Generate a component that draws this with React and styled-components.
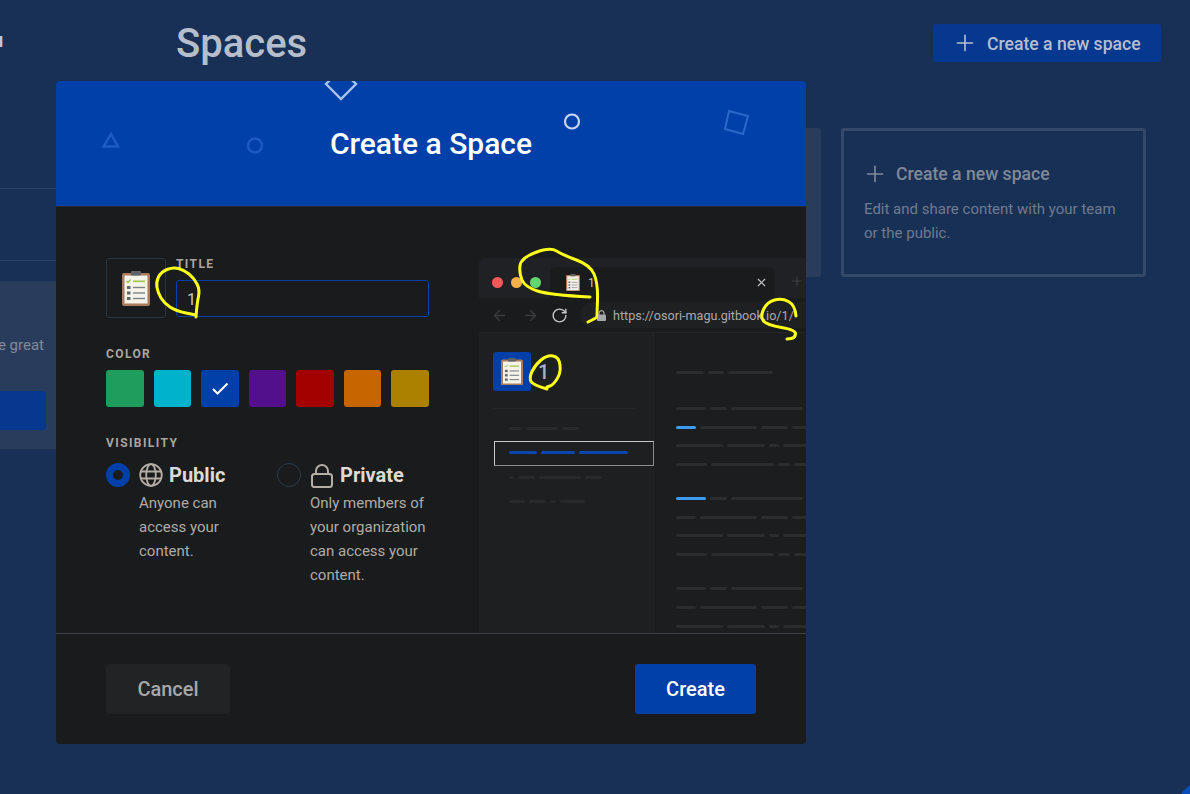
import React from "react";
import styled, { createGlobalStyle } from "styled-components";
import { ArrowLeft, ArrowRight, Plus, RotateCw, X } from "lucide-react";

const Global = createGlobalStyle`
  html, body { margin: 0; padding: 0; background: #193056; }
  body { font-family: Roboto, "Liberation Sans", sans-serif; }
  * { box-sizing: border-box; }
`;

const Page = styled.div`
  position: relative; display: flex; width: 1190px; height: 794px;
  overflow: hidden; background: #193056;
`;
const SideRail = styled.aside`
  width: 60px; flex: none; overflow: hidden; padding-top: 28px;
  display: flex; flex-direction: column;
`;
const Brand = styled.div`
  display: flex; justify-content: flex-end; height: 24px; padding-right: 56.5px;
  font-size: 21px; font-weight: 500; line-height: 24px; color: #c2c7d0; white-space: nowrap;
`;
const RailRule = styled.div`
  height: 1px; background: #2e4263; margin-top: ${p => p.$top}px; flex: none;
`;
const Promo = styled.div`
  margin-top: 20px; height: 168px; background: #2a3c5c; padding-top: 55px;
  display: flex; flex-direction: column; align-items: flex-end; flex: none;
`;
const PromoText = styled.div`
  font-size: 15px; line-height: 18px; color: #7f8a9b; white-space: nowrap; padding-right: 16px;
`;
const PromoButton = styled.div`
  margin-top: 37px; margin-right: 14px; width: 46px; height: 39px;
  background: #07388f; border-radius: 0 3px 3px 0;
`;
const Main = styled.main`
  flex: 1; min-width: 0; padding: 24px 29px 0 116px; display: flex; flex-direction: column;
`;
const TopBar = styled.header`
  display: flex; justify-content: space-between; align-items: center; height: 38px;
`;
const PageTitle = styled.h1`
  margin: 2px 0 0; font-size: 40px; font-weight: 500; line-height: 38px; color: #b6becb;
`;
const NewButton = styled.div`
  width: 228px; height: 38px; border-radius: 3px; background: #07388f; color: #b5bed0;
  display: flex; align-items: center; gap: 9px; padding-left: 19px;
  font-size: 17.6px; font-weight: 500;
`;
const ButtonLabel = styled.span`
  margin-top: 2px;
`;
const Cards = styled.div`
  display: grid; grid-template-columns: 645px 305px; gap: 20px; margin-top: 66px;
`;
const FilledCard = styled.div`
  height: 149px; background: #2a3c5c; border-radius: 3px;
`;
const OutlineCard = styled.div`
  height: 149px; border: 3px solid #34486a; border-radius: 3px; padding: 29px 20px;
`;
const CardTitle = styled.div`
  display: flex; align-items: center; gap: 8px; height: 28px; margin-left: -2px;
  font-size: 17.6px; font-weight: 500; color: #7f8998;
`;
const CardText = styled.p`
  margin: 9px 0 0; font-size: 15px; line-height: 24px; color: #6e7b90;
`;

const Modal = styled.section`
  position: absolute; left: 56px; top: 81px; width: 750px; height: 663px;
  border-radius: 4px; overflow: hidden; background: #1a1b1d;
  display: flex; flex-direction: column;
`;
const ModalHead = styled.header`
  position: relative; height: 126px; flex: none; background: #0040a8; overflow: hidden;
  display: flex; align-items: center; justify-content: center; padding-top: 1px;
  border-bottom: 1px solid #232a36;
`;
const Decor = styled.svg`
  position: absolute; left: 0; top: 0;
`;
const ModalTitle = styled.h2`
  position: relative; margin: 0; font-size: 30px; font-weight: 500; color: #fff; line-height: 36px;
`;
const ModalBody = styled.div`
  flex: 1; min-height: 0; display: flex; gap: 50px; padding: 51px 0 0 50px;
`;
const FormColumn = styled.div`
  width: 323px; flex: none; display: flex; flex-direction: column;
`;
const TitleRow = styled.div`
  display: flex; gap: 10px;
`;
const IconBox = styled.div`
  width: 60px; height: 60px; flex: none; border: 1px solid #2a3640; border-radius: 3px;
  display: flex; align-items: center; justify-content: center;
`;
const TitleField = styled.div`
  flex: 1; display: flex; flex-direction: column;
`;
const Label = styled.div`
  font-size: 12px; font-weight: 700; letter-spacing: 1.4px; line-height: 12px; color: #aaa69f;
  margin-top: ${p => p.$top || 0}px;
`;
const TitleInput = styled.div`
  height: 37px; margin-top: 10px; border: 1px solid #0040a8; border-radius: 3px;
  padding: 0 10px; line-height: 37px; font-size: 16px; color: #c6c6c6;
`;
const Swatches = styled.div`
  display: flex; gap: 10px; margin-top: 10px;
`;
const Swatch = styled.div`
  flex: 1; height: 37px; border-radius: 3px; background: ${p => p.$c};
  display: flex; align-items: center; justify-content: center;
`;
const Options = styled.div`
  display: flex; margin-top: 14px;
`;
const Option = styled.div`
  display: flex; gap: 9px; width: ${p => p.$w}px; flex: none;
`;
const Radio = styled.div`
  width: 24px; height: 24px; flex: none; border-radius: 50%;
  border: ${p => (p.$on ? "7px solid #0040a8" : "1px solid #2a3a4a")};
`;
const OptionBody = styled.div`
  display: flex; flex-direction: column;
`;
const OptionHead = styled.div`
  display: flex; align-items: center; gap: 6px; height: 24px;
  font-size: 20px; font-weight: 700; color: #dedad3;
`;
const OptionText = styled.p`
  margin: 4px 0 0; font-size: 15px; line-height: 24px; color: #b0aca5;
`;

const Preview = styled.div`
  flex: 1; min-width: 0; overflow: hidden; background: #1c1d1f; border-radius: 5px 0 0 0;
  display: flex; flex-direction: column;
`;
const TabStrip = styled.div`
  position: relative; height: 40px; flex: none; background: #202124; display: flex; align-items: flex-end;
  padding-left: 13px;
`;
const Lights = styled.div`
  display: flex; gap: 8px; width: 58px; flex: none; align-self: flex-start; margin-top: 18.5px;
`;
const Light = styled.span`
  width: 11px; height: 11px; border-radius: 50%; background: ${p => p.$c};
`;
const Tab = styled.div`
  width: 225px; height: 31px; flex: none; background: #1a1b1d; border-radius: 6px 6px 0 0;
  display: flex; align-items: center; padding: 0 7px 0 16px; gap: 8px;
  font-size: 12px; color: #c4c6c9;
`;
const TabName = styled.span`
  flex: 1;
`;
const NewTab = styled.div`
  margin-left: 15px; align-self: flex-start; margin-top: 16px; color: #3d3f43; display: flex;
`;
const Toolbar = styled.div`
  height: 35px; flex: none; background: #1a1b1d; border-bottom: 1px solid #232527;
  display: flex; align-items: center; padding-left: 12px;
`;
const NavIcon = styled.div`
  width: ${p => p.$w}px; flex: none; display: flex; color: ${p => p.$c};
`;
const AddressPill = styled.div`
  flex: 1; height: 26px; border-radius: 13px 0 0 13px; background: #1f2022;
  display: flex; align-items: center; padding-left: 17px; gap: 7px;
  font-size: 12.6px; color: #a9abae; white-space: nowrap;
`;
const PreviewBody = styled.div`
  flex: 1; min-height: 0; display: flex;
`;
const PreviewSide = styled.div`
  width: 175px; flex: none; background: #1e1f21; border-right: 1px solid #212325;
  padding-top: 19px; display: flex; flex-direction: column;
`;
const SideBrand = styled.div`
  display: flex; align-items: center; gap: 7px; padding-left: 14px; height: 39px;
  font-size: 20px; font-weight: 500; color: #a9b3c0;
`;
const BrandTile = styled.div`
  width: 38px; height: 39px; border-radius: 3px; background: #0040a8;
  display: flex; align-items: center; justify-content: center;
`;
const SideRule = styled.div`
  height: 1px; margin: 17px 16px 0 14px; background: #232527;
`;
const SideRow = styled.div`
  display: flex; gap: 4px; padding-left: 30px; margin-top: ${p => p.$top}px;
`;
const SelectedNav = styled.div`
  flex: none; height: 25px; margin: 11px 0 0 15px; width: 160px; border: 1.5px solid #c8c8c8;
  border-bottom-color: #8c8c8c; border-right-color: #8c8c8c;
  padding: 9px 0 0 13.5px; display: flex; gap: 4px;
`;
const Bar = styled.span`
  display: block; height: 3px; flex: none; border-radius: 2px;
  width: ${p => p.$w}px; background: ${p => p.$c || "#27292c"};
`;
const PreviewMain = styled.div`
  flex: 1; min-width: 0; overflow: hidden; padding: 38px 0 0 22px;
  display: flex; flex-direction: column;
`;
const LineGroup = styled.div`
  display: flex; flex-direction: column; gap: 15.7px; margin-bottom: ${p => p.$gap}px;
`;
const Line = styled.div`
  display: flex; gap: 4px;
`;

const Footer = styled.footer`
  height: 111px; flex: none; border-top: 1px solid #3a4046; padding: 30px 50px;
  display: flex; justify-content: space-between; align-items: flex-start;
`;
const CancelButton = styled.div`
  width: 124px; height: 50px; border-radius: 3px; background: #222325; color: #a8a8a8;
  display: flex; align-items: center; justify-content: center; font-size: 20px; font-weight: 500;
`;
const CreateButton = styled.div`
  width: 121px; height: 50px; border-radius: 3px; background: #0040a8; color: #fff;
  display: flex; align-items: center; justify-content: center; font-size: 20px; font-weight: 500;
`;
const Scribbles = styled.svg`
  position: absolute; left: 0; top: 0; pointer-events: none;
`;
const ChatBubble = styled.div`
  position: absolute; left: 1177px; top: 781px; width: 56px; height: 56px;
  border-radius: 50%; background: #0a4dbb;
`;

const Clipboard = ({ w }) => (
  <svg width={w} height={w * 1.25} viewBox="0 0 28 35">
    <rect x="0" y="2" width="28" height="33" rx="2" fill="#a97a5c" />
    <rect x="2.5" y="4.5" width="23" height="28" fill="#f6f3ea" />
    <rect x="9" y="0" width="10" height="4.5" rx="1" fill="#5d6369" />
    <path d="M4.5 10l1.5 1.5 2.5-3" stroke="#8fc04a" strokeWidth="1.2" fill="none" />
    <rect x="11" y="9.5" width="12" height="1.6" fill="#9cc552" />
    <rect x="5" y="15" width="3.5" height="3" fill="#5f666c" />
    <rect x="11" y="15.8" width="12" height="1.4" fill="#7c8388" />
    <rect x="5" y="20.5" width="3.5" height="3" fill="#5f666c" />
    <rect x="11" y="21.3" width="12" height="1.4" fill="#7c8388" />
    <rect x="5" y="26" width="3.5" height="3" fill="#5f666c" />
    <rect x="11" y="26.8" width="12" height="1.4" fill="#7c8388" />
  </svg>
);

const GlobeIcon = () => (
  <svg width="24" height="24" viewBox="0 0 24 24" fill="none" stroke="#b3aea6" strokeWidth="1.8">
    <circle cx="12" cy="12" r="10.8" />
    <ellipse cx="12" cy="12" rx="4.8" ry="10.8" />
    <path d="M2 8.5h20M2 15.500h20" />
  </svg>
);

const LockIcon = () => (
  <svg width="24" height="25" viewBox="0 0 24 25" fill="none" stroke="#b3aea6" strokeWidth="2">
    <rect x="2" y="11" width="20" height="13" rx="2.5" />
    <path d="M6 11V8a6 6 0 0 1 12 0v3" />
  </svg>
);

const SmallLock = () => (
  <svg width="9" height="11" viewBox="0 0 9 11">
    <rect x="0" y="4.5" width="9" height="6.5" rx="1" fill="#a5a7aa" />
    <path d="M2 5V3.2a2.5 2.5 0 0 1 5 0V5" fill="none" stroke="#a5a7aa" strokeWidth="1.2" />
  </svg>
);

const smooth = pts => {
  let d = `M${pts[0][0]} ${pts[0][1]}`;
  for (let i = 1; i < pts.length - 1; i++) {
    const mx = (pts[i][0] + pts[i + 1][0]) / 2;
    const my = (pts[i][1] + pts[i + 1][1]) / 2;
    d += ` Q${pts[i][0]} ${pts[i][1]} ${mx} ${my}`;
  }
  const last = pts[pts.length - 1];
  return `${d} L${last[0]} ${last[1]}`;
};

const marks = [
  [[196, 317], [197, 303], [200, 290], [194, 278], [184, 270], [173, 267], [161, 272], [156, 282], [158, 293], [164, 303], [176, 311], [196, 315]],
  [[590, 297], [550, 295], [525, 287], [519, 273], [521, 258], [550, 247], [563, 255], [590, 265], [598, 283], [597, 317], [596, 318], [588, 322]],
  [[796, 316], [795, 305], [782, 298], [767, 302], [760, 317], [767, 325], [796, 330], [795, 338], [787, 339]],
  [[547, 389], [533, 385], [529, 378], [535, 365], [547, 355], [559, 357], [561, 373], [553, 385], [547, 387]],
];

const palette = ["#1f9d5c", "#00b2cc", "#0040a8", "#52108c", "#a30000", "#c76600", "#ad8100"];

const A = [47, 38, 10, 60];
const B = [31, 63, 12, 60];
const C = [20, 57, 27, 60];
const H = [30, 17, 72, 40];

const Skeleton = ({ widths, accent }) => (
  <Line>
    {widths.map((w, i) => (
      <Bar key={i} $w={w} $c={i === 0 && accent ? "#3d9bf0" : "#2a2c30"} />
    ))}
  </Line>
);

export default function App() {
  return (
    <Page>
      <Global />
      <SideRail>
        <Brand>u</Brand>
        <RailRule $top={136} />
        <RailRule $top={71} />
        <Promo>
          <PromoText>make great</PromoText>
          <PromoButton />
        </Promo>
      </SideRail>
      <Main>
        <TopBar>
          <PageTitle>Spaces</PageTitle>
          <NewButton><Plus size={26} strokeWidth={1.5} /><ButtonLabel>Create a new space</ButtonLabel></NewButton>
        </TopBar>
        <Cards>
          <FilledCard />
          <OutlineCard>
            <CardTitle><Plus size={26} strokeWidth={1.5} />Create a new space</CardTitle>
            <CardText>Edit and share content with your team or the public.</CardText>
          </OutlineCard>
        </Cards>
      </Main>

      <Modal>
        <ModalHead>
          <Decor width="750" height="126" viewBox="0 0 750 126" fill="none">
            <path d="M270 3 L285 18 L300 3 L285 -12 Z" stroke="#a9c2ea" strokeWidth="2.4" />
            <path d="M55 53 L62 65.500 L47.500 65.500 Z" stroke="#1c5ac4" strokeWidth="2.500" />
            <circle cx="199" cy="64.500" r="7" stroke="#1c5ac4" strokeWidth="2.500" />
            <circle cx="516" cy="40.500" r="7" stroke="#c8d8f2" strokeWidth="2.200" />
            <path d="M673 30 L692 35 L687 53 L669 48 Z" stroke="#2a68cc" strokeWidth="2" />
          </Decor>
          <ModalTitle>Create a Space</ModalTitle>
        </ModalHead>
        <ModalBody>
          <FormColumn>
            <TitleRow>
              <IconBox><Clipboard w={28} /></IconBox>
              <TitleField>
                <Label>TITLE</Label>
                <TitleInput>1</TitleInput>
              </TitleField>
            </TitleRow>
            <Label $top={30}>COLOR</Label>
            <Swatches>
              {palette.map((c, i) => (
                <Swatch key={c} $c={c}>
                  {i === 2 && (
                    <svg width="18" height="14" viewBox="0 0 18 14" fill="none" stroke="#fff" strokeWidth="2">
                      <path d="M2 7l4.500 4.500L16.500 1.500" />
                    </svg>
                  )}
                </Swatch>
              ))}
            </Swatches>
            <Label $top={30}>VISIBILITY</Label>
            <Options>
              <Option $w={171}>
                <Radio $on />
                <OptionBody>
                  <OptionHead><GlobeIcon />Public</OptionHead>
                  <OptionText>Anyone can<br />access your<br />content.</OptionText>
                </OptionBody>
              </Option>
              <Option $w={152}>
                <Radio />
                <OptionBody>
                  <OptionHead><LockIcon />Private</OptionHead>
                  <OptionText>Only members of<br />your organization<br />can access your<br />content.</OptionText>
                </OptionBody>
              </Option>
            </Options>
          </FormColumn>

          <Preview>
            <TabStrip>
              <Lights>
                <Light $c="#f25a5a" />
                <Light $c="#f4b04a" />
                <Light $c="#63d66f" />
              </Lights>
              <Tab>
                <Clipboard w={14} />
                <TabName>1</TabName>
                <X size={13} color="#c4c6c9" />
              </Tab>
              <NewTab><Plus size={14} /></NewTab>
            </TabStrip>
            <Toolbar>
              <NavIcon $w={31} $c="#3a3c40"><ArrowLeft size={17} /></NavIcon>
              <NavIcon $w={29} $c="#3a3c40"><ArrowRight size={17} /></NavIcon>
              <NavIcon $w={29} $c="#c4c6c9"><RotateCw size={17} /></NavIcon>
              <AddressPill><SmallLock />https://osori-magu.gitbook.io/1/</AddressPill>
            </Toolbar>
            <PreviewBody>
              <PreviewSide>
                <SideBrand>
                  <BrandTile><Clipboard w={22} /></BrandTile>
                  1
                </SideBrand>
                <SideRule />
                <SideRow $top={18}><Bar $w={13} /><Bar $w={32} /><Bar $w={17} /></SideRow>
                <SelectedNav>
                  <Bar $w={28} $c="#0b45ae" /><Bar $w={34} $c="#0b45ae" /><Bar $w={49} $c="#0b45ae" />
                </SelectedNav>
                <SideRow $top={10}><Bar $w={5} /><Bar $w={17} /><Bar $w={42} /><Bar $w={17} /></SideRow>
                <SideRow $top={21}><Bar $w={16} /><Bar $w={17} /><Bar $w={6} /><Bar $w={25} /></SideRow>
              </PreviewSide>
              <PreviewMain>
                <LineGroup $gap={33}><Skeleton widths={[28, 16, 45]} /></LineGroup>
                <LineGroup $gap={31}>
                  <Skeleton widths={H} />
                  <Skeleton widths={C} accent />
                  <Skeleton widths={A} />
                  <Skeleton widths={B} />
                </LineGroup>
                <LineGroup $gap={31}>
                  <Skeleton widths={H} accent />
                  <Skeleton widths={C} />
                  <Skeleton widths={A} />
                  <Skeleton widths={B} />
                </LineGroup>
                <LineGroup $gap={0}>
                  <Skeleton widths={H} />
                  <Skeleton widths={C} />
                  <Skeleton widths={A} />
                </LineGroup>
              </PreviewMain>
            </PreviewBody>
          </Preview>
        </ModalBody>
        <Footer>
          <CancelButton>Cancel</CancelButton>
          <CreateButton>Create</CreateButton>
        </Footer>
      </Modal>

      <Scribbles width="1190" height="794" viewBox="0 0 1190 794" fill="none" stroke="#ffff1a" strokeWidth="3" strokeLinecap="round" strokeLinejoin="round">
        {marks.map((m, i) => <path key={i} d={smooth(m)} />)}
      </Scribbles>
      <ChatBubble />
    </Page>
  );
}
